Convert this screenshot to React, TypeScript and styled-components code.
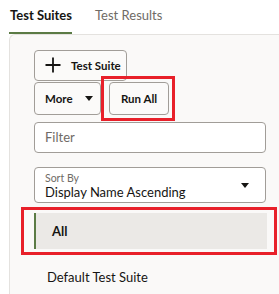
import React from 'react';
import styled, { createGlobalStyle } from 'styled-components';

const GlobalStyle = createGlobalStyle`
  html, body {
    margin: 0;
    padding: 0;
    background: #ffffff;
    font-family: Lato, "Liberation Sans", sans-serif;
    color: #161513;
  }
`;

const Page = styled.div`
  width: 279px;
  height: 294px;
  overflow: hidden;
`;

const TabBar = styled.div`
  display: flex;
  gap: 22px;
  height: 34px;
  padding-left: 9px;
  box-sizing: border-box;
`;

const Tab = styled.div<{ $active?: boolean }>`
  display: flex;
  align-items: center;
  padding: 0 0 2px 1px;
  font-size: 13px;
  font-weight: ${(p) => (p.$active ? 700 : 400)};
  color: ${(p) => (p.$active ? '#161513' : '#6f6b66')};
  border-bottom: 2px solid ${(p) => (p.$active ? '#5b7b45' : 'transparent')};
  box-sizing: border-box;
  white-space: nowrap;
`;

const Panel = styled.div`
  margin-left: 9px;
  padding: 15px 12px 0 24px;
  background: #faf9f8;
  border-top: 1px solid #e4e2df;
  border-left: 1px solid #e4e2df;
  border-top-left-radius: 6px;
  height: 260px;
  box-sizing: border-box;
  display: flex;
  flex-direction: column;
`;

const Button = styled.button<{ $w: number; $h?: number; $center?: boolean }>`
  display: flex;
  align-items: center;
  justify-content: ${(p) => (p.$center ? 'center' : 'flex-start')};
  gap: 10px;
  width: ${(p) => p.$w}px;
  height: ${(p) => p.$h ?? 33}px;
  padding: ${(p) => (p.$center ? '0' : '0 0 0 10px')};
  background: #fbfaf9;
  border: 1px solid #a19d98;
  border-radius: 4px;
  font-family: inherit;
  font-size: 11.5px;
  font-weight: 700;
  color: #161513;
  box-sizing: border-box;
  white-space: nowrap;
`;

const ButtonRow = styled.div`
  display: flex;
  gap: 8px;
  margin-top: 1px;
`;

const Marked = styled.div<{ $l: number; $r: number; $t: number; $b: number; $mt?: number }>`
  position: relative;
  margin-top: ${(p) => p.$mt ?? 0}px;
  &::after {
    content: '';
    position: absolute;
    left: -${(p) => p.$l}px;
    right: -${(p) => p.$r}px;
    top: -${(p) => p.$t}px;
    bottom: -${(p) => p.$b}px;
    border: 3px solid #e8202a;
    pointer-events: none;
  }
`;

const Caret = styled.span<{ $ml?: number }>`
  width: 0;
  height: 0;
  margin-left: ${(p) => p.$ml ?? 0}px;
  border-left: 4px solid transparent;
  border-right: 4px solid transparent;
  border-top: 5px solid #161513;
`;

const Field = styled.div<{ $h: number; $mt: number }>`
  height: ${(p) => p.$h}px;
  margin-top: ${(p) => p.$mt}px;
  width: 232px;
  background: #ffffff;
  border: 1px solid #a19d98;
  border-radius: 4px;
  box-sizing: border-box;
  padding: 0 16px 0 10px;
  display: flex;
  align-items: center;
`;

const Placeholder = styled.span`
  font-size: 13px;
  color: #6f6b66;
`;

const SelectText = styled.div`
  flex: 1;
  display: flex;
  flex-direction: column;
  padding-top: 1px;
`;

const SelectLabel = styled.span`
  font-size: 10.5px;
  line-height: 12px;
  color: #6f6b66;
`;

const SelectValue = styled.span`
  font-size: 13px;
  line-height: 16px;
  color: #161513;
  white-space: nowrap;
`;

const ListRow = styled.div<{ $selected?: boolean; $mt?: number }>`
  height: 36px;
  width: 233px;
  margin-top: ${(p) => p.$mt ?? 0}px;
  box-sizing: border-box;
  display: flex;
  align-items: center;
  padding-left: ${(p) => (p.$selected ? 16 : 13)}px;
  background: ${(p) => (p.$selected ? '#ebe9e6' : 'transparent')};
  border-left: ${(p) => (p.$selected ? '2px solid #5b7b45' : 'none')};
  font-size: 13px;
  font-weight: ${(p) => (p.$selected ? 700 : 400)};
  color: #161513;
  white-space: nowrap;
`;

const PlusIcon = () => (
  <svg width="16" height="16" viewBox="0 0 16 16">
    <path d="M8 0.5v15M0.5 8h15" stroke="#161513" strokeWidth="1.8" fill="none" />
  </svg>
);

export default function App() {
  return (
    <Page>
      <GlobalStyle />
      <TabBar>
        <Tab $active>Test Suites</Tab>
        <Tab>Test Results</Tab>
      </TabBar>
      <Panel>
        <Button $w={93} $h={32}>
          <PlusIcon />
          Test Suite
        </Button>
        <ButtonRow>
          <Button $w={67}>
            More
            <Caret $ml={2} />
          </Button>
          <Marked $l={8} $r={6} $t={6} $b={6}>
            <Button $w={60} $center>
              Run All
            </Button>
          </Marked>
        </ButtonRow>
        <Field $h={32} $mt={7}>
          <Placeholder>Filter</Placeholder>
        </Field>
        <Field $h={38} $mt={14}>
          <SelectText>
            <SelectLabel>Sort By</SelectLabel>
            <SelectValue>Display Name Ascending</SelectValue>
          </SelectText>
          <Caret />
        </Field>
        <Marked $l={13} $r={10} $t={6} $b={6} $mt={10}>
          <ListRow $selected>All</ListRow>
        </Marked>
        <ListRow $mt={10}>Default Test Suite</ListRow>
      </Panel>
    </Page>
  );
}
